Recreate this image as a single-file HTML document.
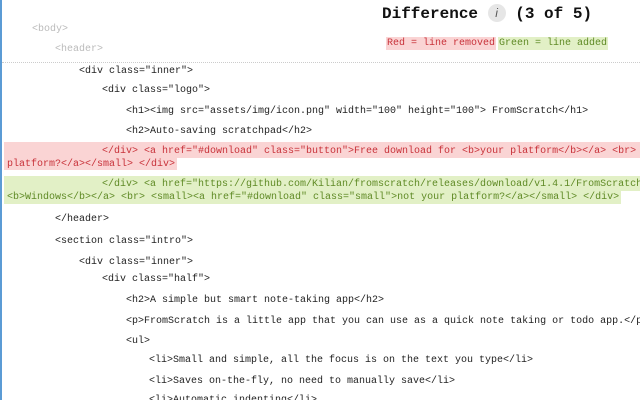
<!DOCTYPE html>
<html><head><meta charset="utf-8"><style>
html,body{margin:0;padding:0;width:640px;height:400px;overflow:hidden;background:#fff;}
body{position:relative;font-family:"Liberation Mono",monospace;font-size:10px;color:#222;border-left:2px solid #5b9bd5;box-sizing:border-box;}
.l{position:absolute;white-space:pre;line-height:13px;}
.g{color:#bbb;}
.r{background:#fad4d4;color:#c8323a;}
.a{background:#e2f0c6;color:#5f8a25;}
h1{position:absolute;left:380px;top:4px;margin:0;font:bold 16px "Liberation Mono",monospace;color:#111;white-space:pre;}
.i{display:inline-block;width:18px;height:18px;border-radius:9px;background:#e6e6e6;color:#555;font:italic 12px "Liberation Sans",sans-serif;text-align:center;line-height:18px;vertical-align:1px;}
.dot{position:absolute;left:0;right:0;top:62px;border-top:1px dotted #ccc;}
</style></head><body>
<h1>Difference <span class="i">i</span> (3 of 5)</h1>
<div class="l r" style="left:384px;top:37px;padding:0 1px">Red = line removed</div>
<div class="l a" style="left:496px;top:37px;padding:0 1px">Green = line added</div>
<div class="l g" style="left:30px;top:23px">&lt;body&gt;</div>
<div class="l g" style="left:53px;top:43px">&lt;header&gt;</div>
<div class="dot"></div>
<div class="l" style="left:77px;top:65px">&lt;div class="inner"&gt;</div>
<div class="l" style="left:100px;top:84px">&lt;div class="logo"&gt;</div>
<div class="l" style="left:124px;top:105px">&lt;h1&gt;&lt;img src="assets/img/icon.png" width="100" height="100"&gt; FromScratch&lt;/h1&gt;</div>
<div class="l" style="left:124px;top:125px">&lt;h2&gt;Auto-saving scratchpad&lt;/h2&gt;</div>
<div class="l r" style="left:2px;width:638px;top:142px;height:13px;padding-top:3px;text-indent:98px;overflow:hidden">&lt;/div&gt; &lt;a href="#download" class="button"&gt;Free download for &lt;b&gt;your platform&lt;/b&gt;&lt;/a&gt; &lt;br&gt; &lt;small&gt;&lt;a</div>
<div class="l r" style="left:2px;top:158px;height:12px;padding:0 2px 0 3px">platform?&lt;/a&gt;&lt;/small&gt; &lt;/div&gt;</div>
<div class="l a" style="left:2px;width:638px;top:176px;height:13px;padding-top:2px;text-indent:98px;overflow:hidden">&lt;/div&gt; &lt;a href="https://github.com/Kilian/fromscratch/releases/download/v1.4.1/FromScratch.Setup</div>
<div class="l a" style="left:2px;top:191px;height:13px;padding:0 2px 0 3px">&lt;b&gt;Windows&lt;/b&gt;&lt;/a&gt; &lt;br&gt; &lt;small&gt;&lt;a href="#download" class="small"&gt;not your platform?&lt;/a&gt;&lt;/small&gt; &lt;/div&gt;</div>
<div class="l" style="left:53px;top:213px">&lt;/header&gt;</div>
<div class="l" style="left:53px;top:235px">&lt;section class="intro"&gt;</div>
<div class="l" style="left:77px;top:256px">&lt;div class="inner"&gt;</div>
<div class="l" style="left:100px;top:273px">&lt;div class="half"&gt;</div>
<div class="l" style="left:124px;top:294px">&lt;h2&gt;A simple but smart note-taking app&lt;/h2&gt;</div>
<div class="l" style="left:124px;top:315px">&lt;p&gt;FromScratch is a little app that you can use as a quick note taking or todo app.&lt;/p&gt;</div>
<div class="l" style="left:124px;top:335px">&lt;ul&gt;</div>
<div class="l" style="left:147px;top:354px">&lt;li&gt;Small and simple, all the focus is on the text you type&lt;/li&gt;</div>
<div class="l" style="left:147px;top:375px">&lt;li&gt;Saves on-the-fly, no need to manually save&lt;/li&gt;</div>
<div class="l" style="left:147px;top:394px">&lt;li&gt;Automatic indenting&lt;/li&gt;</div>
</body></html>
